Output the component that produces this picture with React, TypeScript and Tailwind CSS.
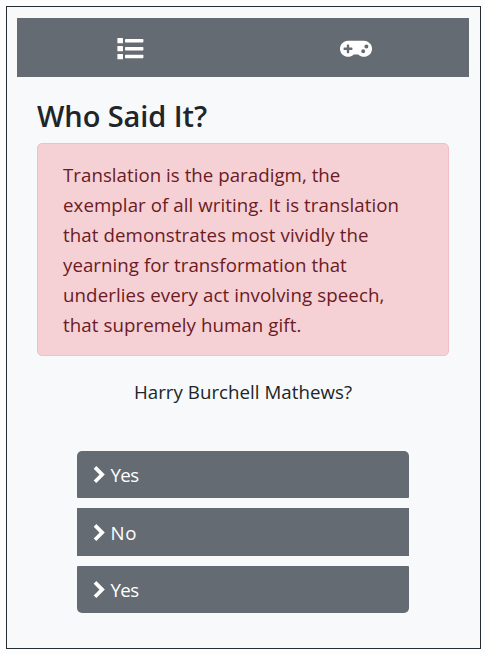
import { FaGamepad } from "react-icons/fa";

const quote = [
  { text: "Translation is the paradigm, the", style: "tracking-[0.03px]" },
  { text: "exemplar of all writing. It is translation", style: "tracking-[0.07px]" },
  { text: "that demonstrates most vividly the", style: "tracking-[0.09px]" },
  { text: "yearning for transformation that", style: "tracking-[0.04px]" },
  { text: "underlies every act involving speech,", style: "tracking-[0.1px]" },
  { text: "that supremely human gift.", style: "tracking-[0.08px]" },
];

const answers = [
  { text: "Yes", style: "h-[47px] rounded-t-[5px] rounded-b-[1px]", label: "tracking-[-0.6px]" },
  { text: "No", style: "h-[48px] pt-px", label: "tracking-[0.6px]" },
  { text: "Yes", style: "h-[47px] rounded-b-[5px] rounded-t-[1px]", label: "tracking-[-0.6px]" },
];

function ListIcon() {
  return (
    <svg width="27" height="22" viewBox="0 0 27 22" fill="currentColor" aria-hidden="true">
      <rect x="0.4" y="0" width="5.6" height="5.2" rx="0.5" />
      <rect x="0.4" y="8" width="5.6" height="5.2" rx="0.5" />
      <rect x="0.4" y="16" width="5.6" height="5.2" rx="0.5" />
      <rect x="8" y="1" width="18.4" height="3.5" rx="0.7" />
      <rect x="8" y="9" width="18.4" height="3.5" rx="0.7" />
      <rect x="8" y="16.7" width="18.4" height="3.5" rx="0.7" />
    </svg>
  );
}

function Chevron() {
  return (
    <svg width="13" height="18" viewBox="0 0 13 18" fill="none" stroke="currentColor" strokeWidth="3.7" strokeLinejoin="miter" aria-hidden="true">
      <path d="M2 1.4 L9.2 8.6 L2 15.8" />
    </svg>
  );
}

export default function App() {
  return (
    <div className="h-[654px] w-[485px] bg-[#fdfdfd] pt-[6px] pl-[6px] font-['Open_Sans','Noto_Sans',sans-serif] text-[#212529]">
      <main className="h-[643px] w-[475px] border border-[#252d33] bg-[#f7f9fb] px-[10px] pt-[11px]">
        <nav className="flex h-[59px] w-[452px] bg-[#646b72] text-white">
          <button aria-label="Quotes" className="flex w-1/2 items-start justify-center pt-[20px]">
            <ListIcon />
          </button>
          <button aria-label="Game" className="flex w-1/2 items-start justify-center pt-[18px]">
            <FaGamepad size={25.6} className="h-[25.6px] w-[32px]" />
          </button>
        </nav>
        <section className="px-5 pt-[21px]">
          <h1 className="h-[45px] text-[29px] leading-[36px] font-semibold whitespace-nowrap">
            <span className="tracking-[-0.08px]">Who Said It?</span>
          </h1>
          <blockquote className="h-[213px] w-[412px] rounded-[5px] border border-[#f2bfc6] bg-[#f5d1d5] pt-[16px] pl-[25px] text-[18.7px] leading-[30px] text-[#6c1a24]">
            {quote.map((line) => (
              <div key={line.text} className="whitespace-nowrap">
                <span className={line.style}>{line.text}</span>
              </div>
            ))}
          </blockquote>
          <p className="mt-[21px] w-[412px] text-center text-[18.7px] leading-[30px] whitespace-nowrap">
            <span className="tracking-[0.04px]">Harry Burchell Mathews?</span>
          </p>
          <div className="mt-[44px] ml-10 flex w-[332px] flex-col gap-[10px]">
            {answers.map((answer, i) => (
              <button
                key={i}
                className={`flex items-center bg-[#646b72] pl-[16px] text-[18.7px] leading-[30px] text-white ${answer.style}`}
              >
                <Chevron />
                <span className={`ml-[4.5px] ${answer.label}`}>{answer.text}</span>
              </button>
            ))}
          </div>
        </section>
      </main>
    </div>
  );
}
